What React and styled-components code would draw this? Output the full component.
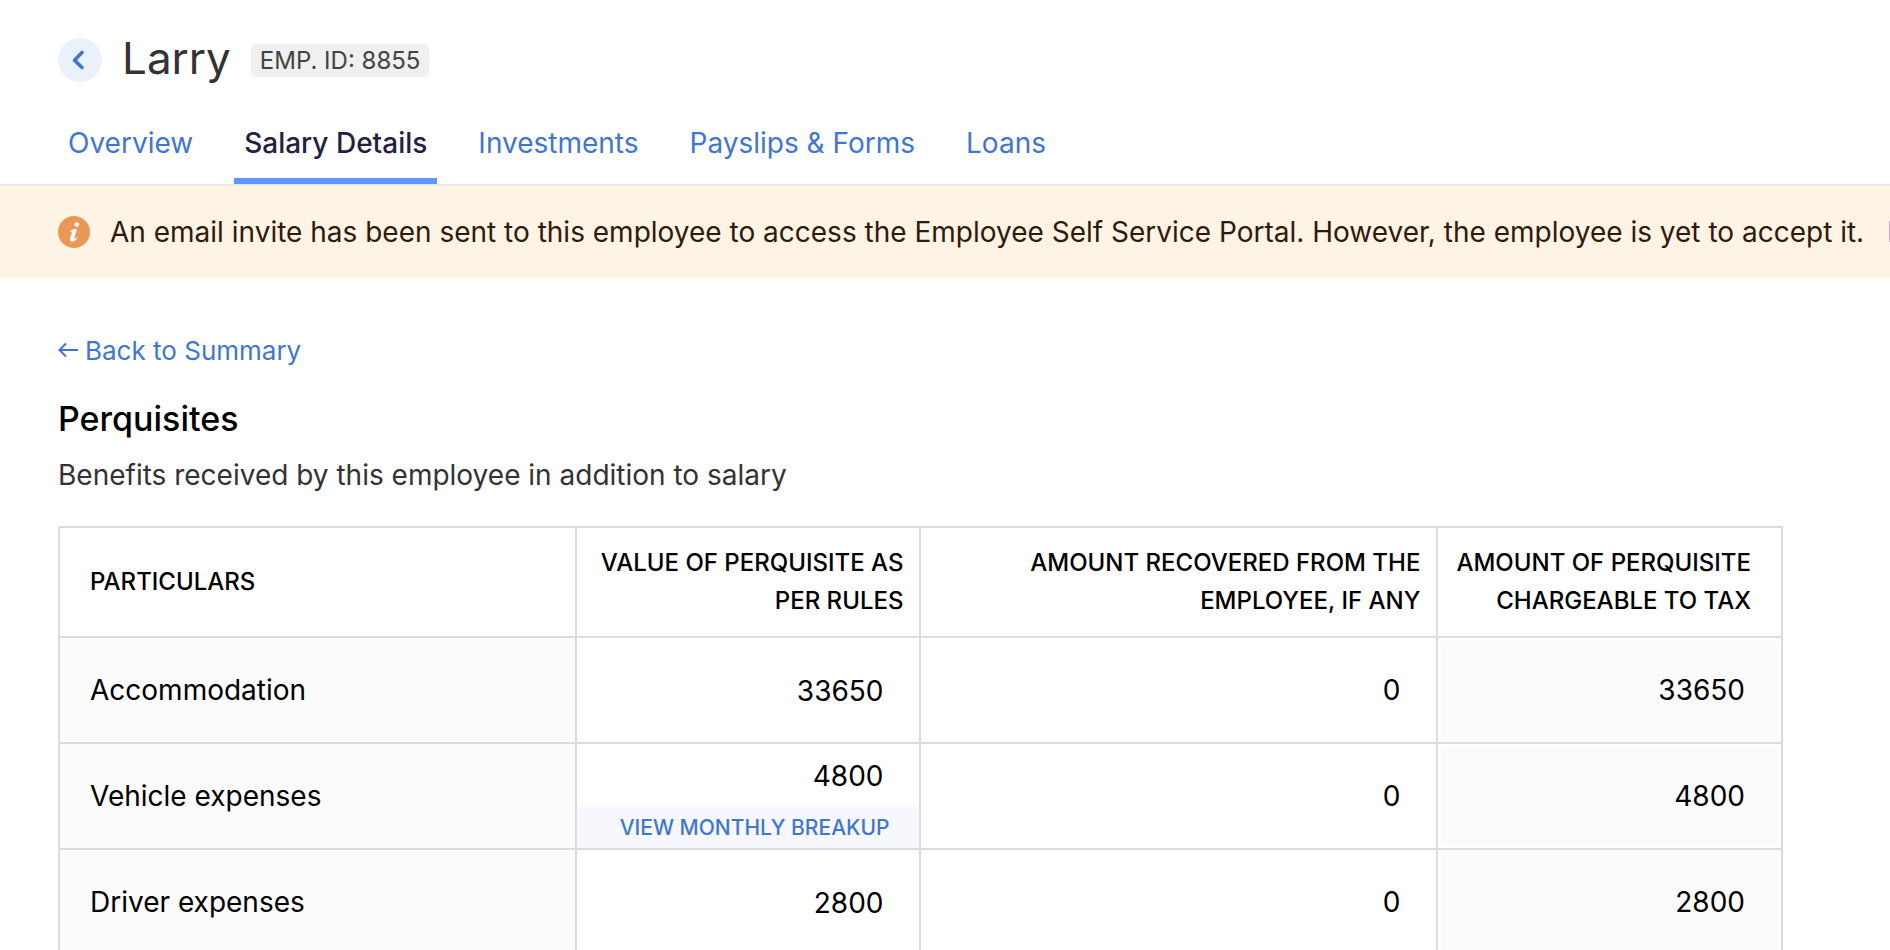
import styled, { createGlobalStyle } from "styled-components";

const tabs = [
  { label: "Overview" },
  { label: "Salary Details", active: true },
  { label: "Investments" },
  { label: "Payslips & Forms" },
  { label: "Loans" },
];

const perquisites = [
  { name: "Accommodation", value: 33650, recovered: 0, taxable: 33650 },
  {
    name: "Vehicle expenses",
    value: 4800,
    recovered: 0,
    taxable: 4800,
    hasBreakup: true,
  },
  { name: "Driver expenses", value: 2800, recovered: 0, taxable: 2800 },
];

export default function App() {
  return (
    <>
      <GlobalStyle />
      <Header>
        <TitleRow>
          <BackButton type="button" aria-label="Back">
            <svg width="44" height="44" viewBox="0 0 44 44" fill="none">
              <path
                d="M24 14.5L16.5 22.2L24 29.5"
                stroke="currentColor"
                strokeWidth="3.6"
                strokeLinecap="round"
                strokeLinejoin="round"
              />
            </svg>
          </BackButton>
          <EmployeeName>Larry</EmployeeName>
          <EmployeeId>EMP. ID: 8855</EmployeeId>
        </TitleRow>
        <Tabs>
          {tabs.map(({ label, active }) => (
            <Tab
              key={label}
              href="#"
              $active={active}
              aria-current={active ? "page" : undefined}
            >
              {label}
            </Tab>
          ))}
        </Tabs>
      </Header>
      <Banner>
        <InfoIcon />
        <BannerText>
          An email invite has been sent to this employee to access the Employee
          Self Service Portal. However, the employee is yet to accept it.
        </BannerText>
        <BannerLink href="#">Resend Invite</BannerLink>
      </Banner>
      <Main>
        <SummaryLink href="#">
          <svg width="21" height="18" viewBox="0 0 21 18" fill="none">
            <path
              d="M20 8H2M8 1.5L1.5 8L8 14.5"
              stroke="currentColor"
              strokeWidth="2"
            />
          </svg>
          Back to Summary
        </SummaryLink>
        <Heading>Perquisites</Heading>
        <Description>
          Benefits received by this employee in addition to salary
        </Description>
        <PerquisiteTable />
      </Main>
    </>
  );
}

function InfoIcon() {
  return (
    <InfoSvg width="32" height="32" viewBox="0 0 32 32">
      <circle cx="16" cy="16" r="16" fill="#eb9755" />
      <circle cx="18.8" cy="8.6" r="2.4" fill="#fff" />
      <path
        d="M12 15.2C13.8 13.7 15.6 12.8 19 12.7L16.4 21.8C16.2 22.9 16.6 23 17.3 22.4L18.6 21.2L19.5 22.1C17.8 24.4 16.2 25.6 14.3 25.6C12.2 25.6 11.6 24 12.2 21.9L13.8 16.4C14 15.6 13.4 15.6 12.4 16.2Z"
        fill="#fff"
      />
    </InfoSvg>
  );
}

function PerquisiteTable() {
  return (
    <Table>
      <colgroup>
        <Col $width="30%" />
        <Col $width="20%" />
        <Col $width="30%" />
        <Col $width="20%" />
      </colgroup>
      <thead>
        <tr>
          <HeadCell scope="col" $align="left">
            Particulars
          </HeadCell>
          <HeadCell scope="col">Value of perquisite as per rules</HeadCell>
          <HeadCell scope="col">
            Amount recovered from the employee, if any
          </HeadCell>
          <HeadCell scope="col">
            Amount of perquisite chargeable to tax
          </HeadCell>
        </tr>
      </thead>
      <tbody>
        {perquisites.map(({ name, value, recovered, taxable, hasBreakup }) => (
          <tr key={name}>
            <NameCell scope="row">{name}</NameCell>
            <Cell>
              <CellStack>
                <Amount>{value}</Amount>
                {hasBreakup && (
                  <BreakupButton type="button">
                    View monthly breakup
                  </BreakupButton>
                )}
              </CellStack>
            </Cell>
            <Cell>
              <Amount>{recovered}</Amount>
            </Cell>
            <TaxableCell>
              <Amount>{taxable}</Amount>
            </TaxableCell>
          </tr>
        ))}
      </tbody>
    </Table>
  );
}

const GlobalStyle = createGlobalStyle`
  * {
    box-sizing: border-box;
  }
  body {
    margin: 0;
    background-color: #fff;
    color: #000;
    font-family: Inter, "Liberation Sans", sans-serif;
    font-size: 28px;
    line-height: 42px;
    overflow-x: hidden;
  }
  a {
    color: #4076d1;
    text-decoration: none;
  }
  button {
    border: none;
    font-family: inherit;
    cursor: pointer;
  }
`;

const Header = styled.header`
  padding: 30px 58px 0;
  border-bottom: 2px solid #ebebeb;
`;

const TitleRow = styled.div`
  display: flex;
  align-items: center;
  height: 60px;
`;

const BackButton = styled.button`
  width: 44px;
  height: 44px;
  padding: 0;
  border-radius: 50%;
  background-color: #ebf1fb;
  color: #4076d1;
  svg {
    display: block;
  }
`;

const EmployeeName = styled.h1`
  margin: 0 20px 4px;
  color: #333;
  font-size: 44px;
  font-weight: 400;
  line-height: 60px;
`;

const EmployeeId = styled.span`
  padding: 0 9px;
  border-radius: 4px;
  background-color: #f0f0f0;
  color: #444;
  font-size: 24px;
  line-height: 33px;
`;

const Tabs = styled.nav`
  display: flex;
  gap: 31px;
`;

const Tab = styled.a`
  padding: 32px 10px 14px;
  border-bottom: 6px solid transparent;
  white-space: nowrap;
  ${({ $active }) =>
    $active &&
    `
    border-bottom-color: #6196fc;
    color: #1f2240;
    font-weight: 500;
  `}
`;

const Banner = styled.div`
  display: flex;
  align-items: center;
  padding: 25px 0 25px 58px;
  background-color: #fdf4e5;
  overflow: hidden;
  white-space: nowrap;
`;

const InfoSvg = styled.svg`
  flex-shrink: 0;
`;

const BannerText = styled.span`
  margin: 0 23px 0 20px;
  color: #32190a;
`;

const BannerLink = styled.a`
  font-weight: 500;
`;

const Main = styled.main`
  padding: 51px 107px 40px 58px;
`;

const SummaryLink = styled.a`
  display: inline-flex;
  align-items: center;
  gap: 6px;
  font-size: 26px;
`;

const Heading = styled.h2`
  margin: 23px 0 0;
  font-size: 34px;
  font-weight: 500;
  line-height: 48px;
`;

const Description = styled.p`
  margin: 11px 0 30px;
  color: #333;
`;

const Table = styled.table`
  width: 100%;
  border-collapse: collapse;
  table-layout: fixed;
`;

const Col = styled.col`
  width: ${({ $width }) => $width};
`;

const HeadCell = styled.th`
  height: 110px;
  padding: 0 16px;
  border: 2px solid #dcdcdc;
  font-size: 24px;
  font-weight: 500;
  line-height: 38px;
  text-align: ${({ $align }) => $align || "right"};
  text-transform: uppercase;
  &:first-child,
  &:last-child {
    padding: 0 30px;
  }
  &:last-child {
    padding-left: 16px;
  }
`;

const NameCell = styled.th`
  height: 106px;
  padding: 0 30px;
  border: 2px solid #dcdcdc;
  background-color: #fbfbfb;
  font-weight: 400;
  text-align: left;
`;

const Cell = styled.td`
  height: 106px;
  padding: 0;
  border: 2px solid #dcdcdc;
  text-align: right;
`;

const TaxableCell = styled(Cell)`
  background-color: #fbfbfb;
  box-shadow: inset 0 0 0 3px #fff;
`;

const CellStack = styled.div`
  display: flex;
  flex-direction: column;
`;

const Amount = styled.span`
  padding: 11px 36px 10px;
`;

const BreakupButton = styled.button`
  padding: 0 30px;
  background-color: #f6f8fe;
  color: #4076d1;
  font-size: 21px;
  font-weight: 500;
  line-height: 41px;
  text-align: right;
  text-transform: uppercase;
`;
